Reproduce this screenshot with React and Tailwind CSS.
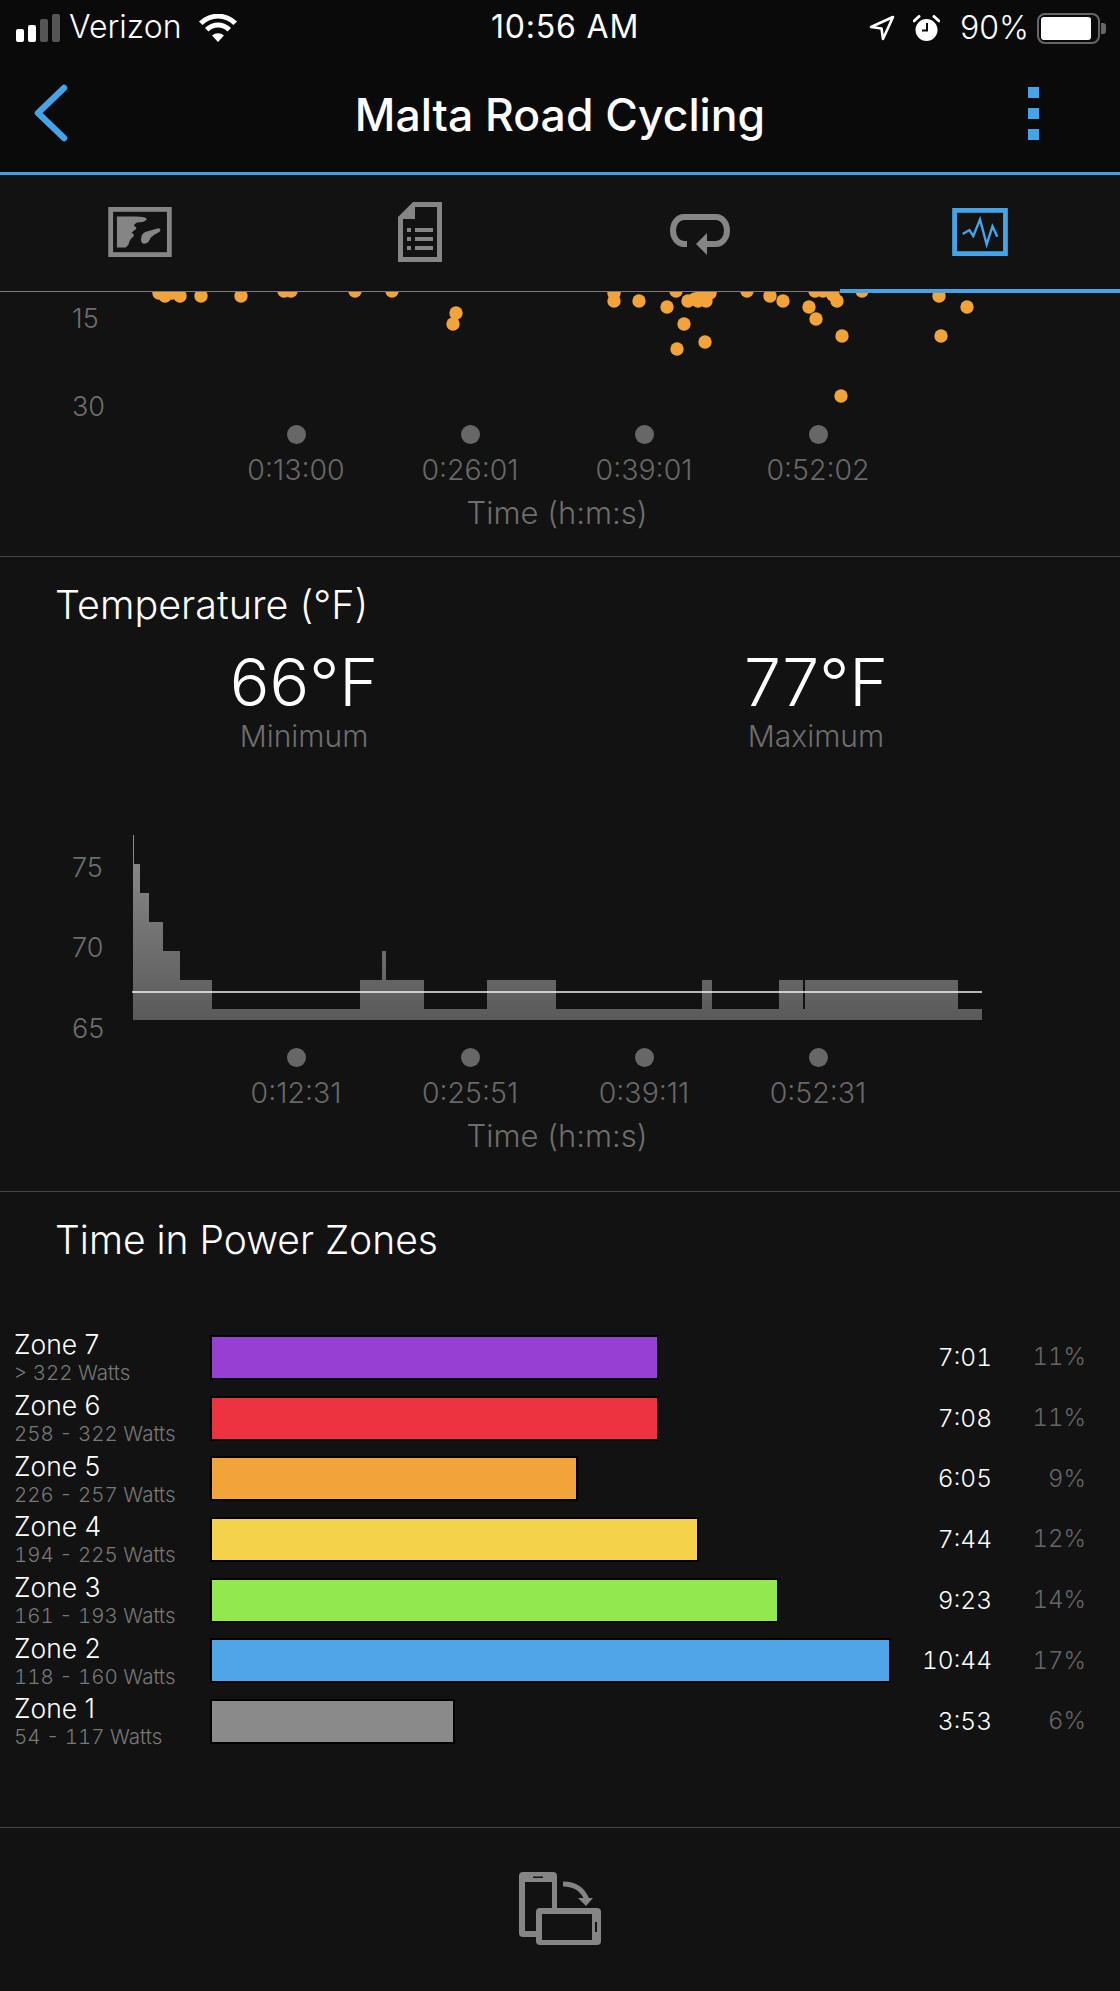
const FONT = "font-['Inter','Noto_Sans',sans-serif]"

const scatterDots = [
    [159, 293], [165, 296], [172, 293], [180, 296], [201, 296], [241, 296], [284, 291], [291, 291], [355, 291], [392, 291],
    [456, 313], [453, 324], [614, 293], [614, 301], [639, 301], [667, 307], [676, 291], [684, 324], [677, 349],
    [705, 342], [688, 301], [695, 299], [698, 301], [706, 301], [702, 293], [710, 293], [747, 291], [770, 296],
    [783, 301], [809, 307], [816, 319], [837, 301], [833, 295], [823, 291], [815, 291], [842, 336], [841, 396],
    [862, 291], [939, 296], [967, 307], [941, 336],
]

// x, top of each step of the temperature area
const tempSteps = [
    [133, 835], [134, 864], [140, 893], [149, 922], [163, 951], [180, 980], [212, 1009], [360, 980], [382, 951],
    [386, 980], [424, 1009], [487, 980], [556, 1009], [702, 980], [712, 1009], [779, 980], [803, 1009], [805, 980],
    [958, 1009],
]
const tempPath = "M133 1020 " + tempSteps.map(([x, y]) => `L${x} ${y}`).reduce((acc, cur, i) => {
    const [x, y] = tempSteps[i]
    const prevY = i > 0 ? tempSteps[i - 1][1] : null
    return acc + (prevY !== null ? `L${x} ${prevY} ` : "") + `L${x} ${y} `
}, "") + "L982 1009 L982 1020 Z"

const zones = [
    { name: "Zone 7", range: "> 322 Watts", color: "bg-[#9640d3]", width: "w-[449px]", time: "7:01", pct: "11%" },
    { name: "Zone 6", range: "258 - 322 Watts", color: "bg-[#ee3340]", width: "w-[449px]", time: "7:08", pct: "11%" },
    { name: "Zone 5", range: "226 - 257 Watts", color: "bg-[#f2a33a]", width: "w-[368px]", time: "6:05", pct: "9%" },
    { name: "Zone 4", range: "194 - 225 Watts", color: "bg-[#f3d249]", width: "w-[489px]", time: "7:44", pct: "12%" },
    { name: "Zone 3", range: "161 - 193 Watts", color: "bg-[#91e94f]", width: "w-[569px]", time: "9:23", pct: "14%" },
    { name: "Zone 2", range: "118 - 160 Watts", color: "bg-[#4fa5e8]", width: "w-[681px]", time: "10:44", pct: "17%" },
    { name: "Zone 1", range: "54 - 117 Watts", color: "bg-[#8a8a8a]", width: "w-[245px]", time: "3:53", pct: "6%" },
]

function StatusBar() {
    return (
        <div className="h-[62px] bg-[#0a0a0a] relative text-white">
            <div className="flex items-center h-[56px] pl-[16px] gap-[6px]">
                <div className="flex items-end gap-[4px] h-[28px]">
                    <div className="w-[8px] h-[13px] bg-white rounded-[2px]"></div>
                    <div className="w-[8px] h-[17px] bg-white rounded-[2px]"></div>
                    <div className="w-[8px] h-[23px] bg-[#555] rounded-[2px]"></div>
                    <div className="w-[8px] h-[28px] bg-[#555] rounded-[2px]"></div>
                </div>
                <span className="text-[32px] font-light ml-[3px] leading-none mb-[2px]">Verizon</span>
                <svg width="38" height="28" viewBox="0 0 38 28" className="ml-[12px]" fill="white">
                    <path d="M19 28 L13 21.5 A9 9 0 0 1 25 21.5 Z" />
                    <path d="M9.5 17.5 L6 14 A18 18 0 0 1 32 14 L28.5 17.5 A13.500 13.500 0 0 0 9.5 17.500 Z" />
                    <path d="M3.500 11 L0 7.500 A27 27 0 0 1 38 7.500 L34.500 11 A22 22 0 0 0 3.500 11 Z" />
                </svg>
            </div>
            <span className="absolute left-[491px] top-[8px] text-[32px] leading-[38px] tracking-[0.8px]">10:56 AM</span>
            <div className="absolute right-[14px] top-[12px] flex items-center">
                <svg width="26" height="26" viewBox="0 0 26 26" fill="none" stroke="white" strokeWidth="2.6" strokeLinejoin="round" className="mr-[18px]">
                    <path d="M2 12 L24 2 L14 24 L12.500 13.500 Z" />
                </svg>
                <svg width="27" height="27" viewBox="0 0 27 27" className="mr-[20px]">
                    <circle cx="13.500" cy="15" r="11" fill="white" />
                    <path d="M14 8 V15.500 H9" stroke="#0a0a0a" strokeWidth="2" fill="none" />
                    <path d="M1 6 L6 1.500 M26 6 L21 1.500" stroke="white" strokeWidth="3" strokeLinecap="round" />
                </svg>
                <span className="text-[32px] font-light leading-none mr-[8px]">90%</span>
                <div className="w-[63px] h-[31px] rounded-[8px] border-[2px] border-[#666] p-[2px]">
                    <div className="w-[90%] h-full bg-white rounded-[3px]"></div>
                </div>
                <div className="w-[5px] h-[11px] bg-[#666] rounded-r-[3px] ml-[1px]"></div>
            </div>
        </div>
    )
}

function Nav() {
    return (
        <div className="h-[113px] bg-[#0a0a0a] border-b-[3px] border-[#3f9fe3] flex items-center justify-between pl-[32px] pr-[81px] pb-[8px] relative">
            <svg width="38" height="60" viewBox="0 0 38 60" fill="none" stroke="#45a3e8" strokeWidth="6.500" strokeLinecap="round" strokeLinejoin="round">
                <path d="M32 5 L6 30 L32 55" />
            </svg>
            <span className="absolute left-0 right-0 top-[28px] text-center text-white text-[44.500px] leading-[50px] font-medium">Malta Road Cycling</span>
            <div className="flex flex-col gap-[10px]">
                <div className="w-[11px] h-[11px] bg-[#45a3e8]"></div>
                <div className="w-[11px] h-[11px] bg-[#45a3e8]"></div>
                <div className="w-[11px] h-[11px] bg-[#45a3e8]"></div>
            </div>
        </div>
    )
}

function Tabs() {
    return (
        <div className="h-[117px] grid grid-cols-4 border-b border-[#7a7a7a] relative items-center justify-items-center pb-[2px]">
            <svg width="64" height="50" viewBox="0 0 66 52">
                <rect x="2.500" y="2.500" width="61" height="47" fill="none" stroke="#858585" strokeWidth="5" />
                <path d="M9 10 H28 Q40 10 40 13 Q38 16 30 16 Q26 18 27 20 Q30 21 29 23 Q26 25 24 27 Q28 28 26 31 Q23 33 22 36 Q21 41 18 42 H9 Z" fill="#858585" />
                <path d="M34 34 Q34 26 42 25 L52 22 Q56 23 53 26 Q47 29 44 32 Q42 39 36 38 Q34 37 34 34 Z" fill="#858585" />
            </svg>
            <svg width="46" height="62" viewBox="0 0 46 62" fill="#858585">
                <path fillRule="evenodd" d="M16 1 H45 V61 H1 V16 Z M18 6 V18 H6 V56 H40 V6 Z" />
                <rect x="10" y="27" width="4" height="4" />
                <rect x="18" y="27" width="18" height="4" />
                <rect x="10" y="36" width="4" height="4" />
                <rect x="18" y="36" width="18" height="4" />
                <rect x="10" y="45" width="4" height="4" />
                <rect x="18" y="45" width="18" height="4" />
            </svg>
            <svg width="62" height="44" viewBox="0 0 62 44" fill="none" className="mt-[5px]">
                <path d="M18 31 H15 A11 13.500 0 0 1 15 4 H47 A11 13.500 0 0 1 47 31 H34" stroke="#858585" strokeWidth="6" />
                <path d="M38 20 V42 L27 31 Z" fill="#858585" />
            </svg>
            <svg width="56" height="48" viewBox="0 0 58 50" fill="none" stroke="#45a3e8">
                <rect x="2.500" y="2.500" width="53" height="45" strokeWidth="5" />
                <path d="M11 27 L18 23 L22 29 L29 12 L36 38 L42 19 L47 30" strokeWidth="2.500" />
            </svg>
            <div className="absolute right-0 bottom-[-2px] w-[280px] h-[4px] bg-[#45a3e8]"></div>
        </div>
    )
}

function XAxis({ labels }) {
    return (
        <div>
            <div className="flex pl-[209px]">
                {labels.map((label) => (
                    <div key={label} className="w-[174px] flex flex-col items-center">
                        <div className="w-[19px] h-[19px] rounded-full bg-[#676767]"></div>
                        <span className="mt-[11px] text-[28.500px] leading-[30px] font-light text-[#686868]">{label}</span>
                    </div>
                ))}
            </div>
            <p className="mt-[10px] text-center text-[31px] leading-[36px] font-light text-[#6e6e6e] pr-[6px]">Time (h:m:s)</p>
        </div>
    )
}

function ScatterSection() {
    return (
        <div className="h-[265px] border-b border-[#444] overflow-hidden">
            <svg width="1120" height="133" viewBox="0 292 1120 133" className="block">
                <text x="72" y="328" fontSize="27" fontWeight="300" fill="#6e6e6e">15</text>
                <text x="72" y="416" fontSize="27" fontWeight="300" fill="#6e6e6e">30</text>
                {scatterDots.map(([cx, cy], i) => (
                    <circle key={i} cx={cx} cy={cy} r="6.700" fill="#f2a33a" />
                ))}
            </svg>
            <XAxis labels={["0:13:00", "0:26:01", "0:39:01", "0:52:02"]} />
        </div>
    )
}

function Stat({ value, label }) {
    return (
        <div className="flex flex-col items-center">
            <span className="text-[66px] leading-[72px] font-light text-white">{value}</span>
            <span className="text-[30px] leading-[32px] font-light text-[#6e6e6e] mt-[2px]">{label}</span>
        </div>
    )
}

function TemperatureSection() {
    return (
        <div className="h-[635px] border-b border-[#444] pt-[26px]">
            <h2 className="pl-[55px] text-[39.500px] leading-[44px] font-light text-white">Temperature (°F)</h2>
            <div className="grid grid-cols-2 px-[48px] mt-[19px]">
                <Stat value="66°F" label="Minimum" />
                <Stat value="77°F" label="Maximum" />
            </div>
            <svg width="1120" height="218" viewBox="0 830 1120 218" className="block mt-[78px]">
                <defs>
                    <linearGradient id="tempFill" x1="0" y1="835" x2="0" y2="1020" gradientUnits="userSpaceOnUse">
                        <stop offset="0" stopColor="#8e8e8e" />
                        <stop offset="1" stopColor="#5a5a5a" />
                    </linearGradient>
                </defs>
                <text x="72" y="877" fontSize="27" fontWeight="300" fill="#6e6e6e">75</text>
                <text x="72" y="957" fontSize="27" fontWeight="300" fill="#6e6e6e">70</text>
                <text x="72" y="1038" fontSize="27" fontWeight="300" fill="#6e6e6e">65</text>
                <path d={tempPath} fill="url(#tempFill)" />
                <rect x="132" y="991" width="850" height="2" fill="#ffffff" fillOpacity="0.7" />
            </svg>
            <XAxis labels={["0:12:31", "0:25:51", "0:39:11", "0:52:31"]} />
        </div>
    )
}

function ZoneRow({ zone }) {
    return (
        <div className="flex items-center h-[60.700px]">
            <div className="w-[210px] pl-[14px] shrink-0">
                <p className="text-[26.500px] leading-[30px] font-light text-white">{zone.name}</p>
                <p className="text-[20.500px] leading-[28px] font-light text-[#787878] whitespace-nowrap tabular-nums">{zone.range}</p>
            </div>
            <div className="flex-1 mb-[2px]">
                <div className={`${zone.width} h-[45px] border-[2px] border-black ${zone.color}`}></div>
            </div>
            <span className="w-[90px] mb-[2px] mr-[1px] text-right text-[24.500px] font-light text-white tabular-nums">{zone.time}</span>
            <span className="w-[93px] mr-[34px] mb-[2px] text-right text-[24px] font-light text-[#666] tabular-nums">{zone.pct}</span>
        </div>
    )
}

function ZonesSection() {
    return (
        <div className="h-[636px] border-b border-[#444] pt-[26px]">
            <h2 className="pl-[55px] text-[39px] leading-[44px] font-light text-white">Time in Power Zones</h2>
            <div className="mt-[66px]">
                {zones.map((zone) => (
                    <ZoneRow key={zone.name} zone={zone} />
                ))}
            </div>
        </div>
    )
}

function Footer() {
    return (
        <div className="flex justify-center pt-[43px]">
            <svg width="84" height="76" viewBox="0 0 84 76">
                <rect x="1" y="1" width="38" height="65" rx="4" fill="#858585" />
                <rect x="7" y="11" width="27" height="49" fill="#121212" />
                <rect x="15" y="5.500" width="10" height="1.500" fill="#121212" />
                <rect x="18" y="37" width="65" height="37" rx="4" fill="#858585" />
                <rect x="24" y="43" width="50" height="26" fill="#121212" />
                <rect x="77" y="51" width="2" height="10" fill="#121212" />
                <path d="M45 13 Q63 13 69 29" fill="none" stroke="#858585" strokeWidth="5" />
                <path d="M60 27 H75 L68 35 Z" fill="#858585" />
            </svg>
        </div>
    )
}

export default function App() {
    return (
        <div className={`w-[1120px] h-[1991px] bg-[#121212] overflow-hidden ${FONT}`}>
            <StatusBar />
            <Nav />
            <Tabs />
            <ScatterSection />
            <TemperatureSection />
            <ZonesSection />
            <Footer />
        </div>
    )
}
